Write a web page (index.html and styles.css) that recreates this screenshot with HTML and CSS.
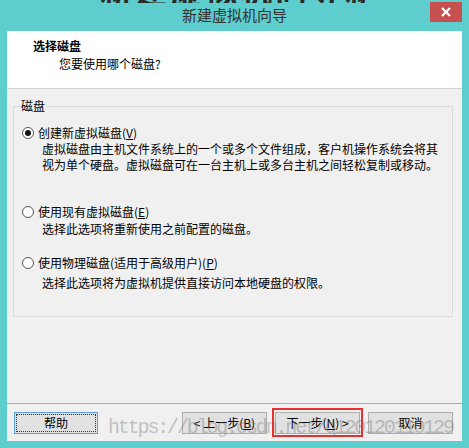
FILE: index.html
```html
<!DOCTYPE html>
<html lang="zh-CN">
<head>
<meta charset="utf-8">
<link rel="stylesheet" href="styles.css">
</head>
<body>
<div class="window">
  <div class="clip-top"><span class="clip-text">新建虚拟机向导新建虚拟机向导</span></div>
  <div class="titlebar">
    <div></div>
    <div class="title">新建虚拟机向导</div>
    <div class="close">
      <svg width="12" height="12" viewBox="0 0 12 12"><path d="M2 2 L10 10 M10 2 L2 10" stroke="#fff" stroke-width="2.2" fill="none"/></svg>
    </div>
  </div>
  <div class="client">
    <div class="header">
      <div class="h-title">选择磁盘</div>
      <div class="h-sub">您要使用哪个磁盘?</div>
    </div>
    <div class="body">
      <fieldset class="group">
        <legend>磁盘</legend>
        <div class="radio-row"><span class="radio checked"></span><span>创建新虚拟磁盘(<u>V</u>)</span></div>
        <div class="desc">虚拟磁盘由主机文件系统上的一个或多个文件组成，客户机操作系统会将其<br>视为单个硬盘。虚拟磁盘可在一台主机上或多台主机之间轻松复制或移动。</div>
        <div class="radio-row r2"><span class="radio"></span><span>使用现有虚拟磁盘(<u>E</u>)</span></div>
        <div class="desc d2">选择此选项将重新使用之前配置的磁盘。</div>
        <div class="radio-row r3"><span class="radio"></span><span>使用物理磁盘(适用于高级用户)(<u>P</u>)</span></div>
        <div class="desc d3">选择此选项将为虚拟机提供直接访问本地硬盘的权限。</div>
      </fieldset>
    </div>
    <div class="footer">
      <button class="btn help"><span class="focus">帮助</span></button>
      <div class="nav">
        <button class="btn">&lt; 上一步(<u>B</u>)</button>
        <span class="marked"><button class="btn">下一步(<u>N</u>) &gt;</button></span>
        <button class="btn">取消</button>
      </div>
      <div class="watermark">https://blog.csdn.net/q120120110129</div>
    </div>
  </div>
</div>
</body>
</html>
```
FILE: styles.css
```css
* { box-sizing: border-box; }
html, body { margin: 0; padding: 0; }
body {
  background: #5dcdcd;
  font-family: "Noto Sans CJK SC", "Noto Sans", sans-serif;
  font-size: 12px;
  color: #000;
  width: 469px;
  height: 448px;
  overflow: hidden;
}
.window {
  position: relative;
  padding: 0 7px 7px 7px;
}
.clip-top {
  position: absolute;
  left: 100px;
  top: 0;
  width: 265px;
  height: 3px;
  max-height: 3px;
  overflow: hidden;
  contain: paint;
}
.clip-text {
  position: absolute;
  left: 0;
  bottom: -2px;
  font-size: 32px;
  line-height: 32px;
  font-weight: bold;
  color: #2a2a2a;
  white-space: nowrap;
  letter-spacing: 3px;
}
.titlebar {
  height: 31px;
  display: grid;
  grid-template-columns: 1fr auto 1fr;
}
.title {
  font-size: 15px;
  line-height: 30px;
  color: #333;
}
.close {
  justify-self: end;
  align-self: start;
  margin-top: 2px;
  width: 32px;
  height: 20px;
  background: #c75050;
  display: flex;
  align-items: center;
  justify-content: center;
}
.client {
  width: 455px;
  height: 410px;
  background: #f0f0f0;
  display: flex;
  flex-direction: column;
}
.header {
  height: 58px;
  background: #fff;
  border-bottom: 1px solid #d0d0d0;
  padding: 7px 0 0 26px;
  line-height: 16px;
}
.h-title { font-weight: bold; }
.h-sub { margin-top: 2px; padding-left: 26px; }
.body {
  height: 314px;
  padding: 9px 9px 0 6px;
}
.group {
  margin: 0;
  border: 1px solid #dcdcdc;
  padding: 11px 8px 25px 8px;
  line-height: 16px;
}
.group legend {
  padding: 0 1px;
  margin-left: -2px;
  line-height: 16px;
}
.radio-row {
  display: flex;
  align-items: center;
  height: 16px;
}
.radio {
  width: 12px;
  height: 12px;
  border: 1px solid #555;
  border-radius: 50%;
  background: #fff;
  margin-right: 4px;
  display: flex;
  align-items: center;
  justify-content: center;
}
.radio.checked::after {
  content: "";
  width: 6px;
  height: 6px;
  border-radius: 50%;
  background: #111;
}
.desc { padding-left: 20px; }
.r2 { margin-top: 31px; }
.d2 { margin-top: 1px; }
.r3 { margin-top: 18px; }
.d3 { margin-top: 4px; }
.footer {
  position: relative;
  flex: 1;
  border-top: 1px solid #acacac;
  padding: 8px 9px 0 7px;
  display: flex;
  align-items: flex-start;
}
.btn {
  width: 85px;
  height: 22px;
  border: 1px solid #adadad;
  background: #e1e1e1;
  font-family: inherit;
  font-size: 12px;
  color: #000;
  padding: 0;
  margin: 0;
  line-height: 18px;
}
.btn.help {
  width: 84px;
  border-color: #5aa0e6;
  padding: 1px;
  display: flex;
}
.help .focus {
  flex: 1;
  border: 1px dotted #333;
  line-height: 16px;
}
.nav {
  margin-left: auto;
  display: flex;
  gap: 8px;
}
.marked {
  position: relative;
  display: block;
}
.marked .btn { display: block; }
.marked::after {
  content: "";
  position: absolute;
  left: -3px;
  right: -3px;
  top: -4px;
  bottom: -3px;
  border: 2px solid #e8312f;
}
.watermark {
  position: absolute;
  left: 101px;
  top: 14px;
  font-family: "Liberation Mono", monospace;
  font-size: 20px;
  line-height: 20px;
  letter-spacing: -2.15px;
  color: rgba(110, 110, 110, 0.38);
  white-space: nowrap;
  pointer-events: none;
}
```
